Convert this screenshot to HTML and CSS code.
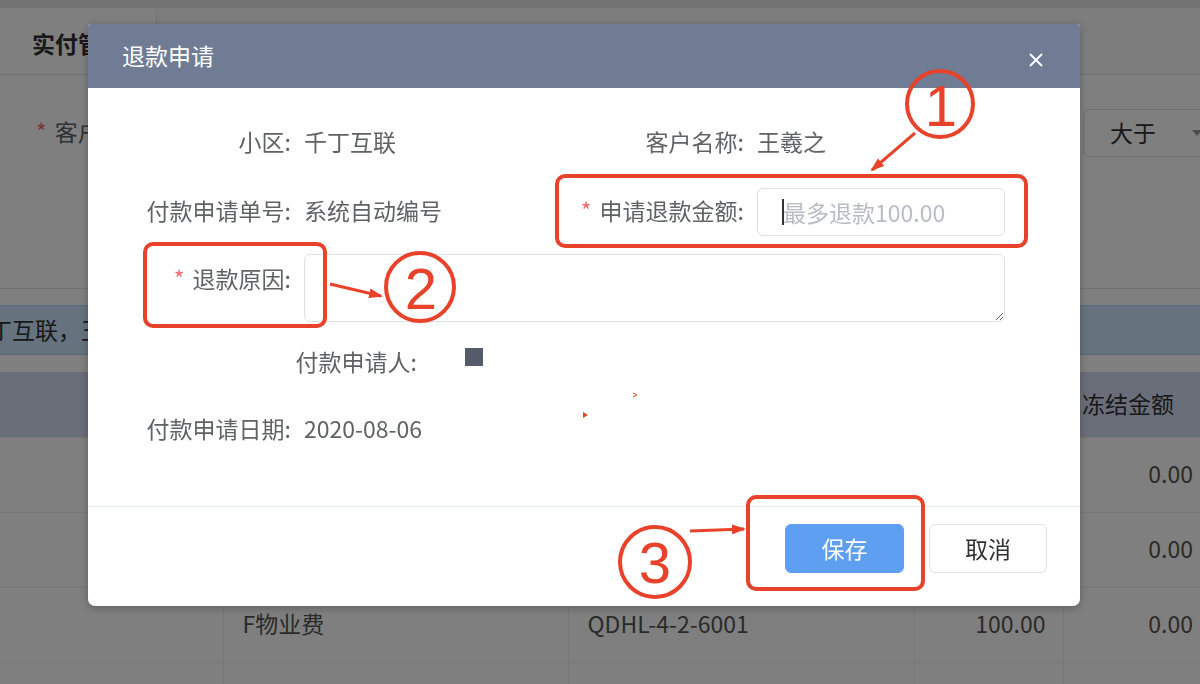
FILE: index.html
```html
<!DOCTYPE html>
<html lang="zh-CN">
<head>
    <meta charset="UTF-8">
    <meta name="viewport" content="width=device-width, initial-scale=1.0">
    <title>退款申请</title>
    <link rel="stylesheet" href="styles.css">
</head>
<body>

    <div class="page">
        <div class="top-strip"></div>
        <div class="tabs">
            <div class="tab">实付管理</div>
        </div>

        <div class="filter">
            <div class="filter-item"><span class="req">*</span>客户名称:</div>
            <div class="select">大于<span class="select-arrow"></span></div>
        </div>

        <div class="alert"><span class="alert-text">千丁互联，王羲之，共有3条待退款记录</span></div>

        <table class="grid">
            <thead>
                <tr>
                    <th class="c1"></th>
                    <th class="c2"></th>
                    <th class="c3"></th>
                    <th class="c4"></th>
                    <th class="c5">冻结金额</th>
                </tr>
            </thead>
            <tbody>
                <tr><td></td><td></td><td></td><td class="num"></td><td class="num">0.00</td></tr>
                <tr><td></td><td></td><td></td><td class="num"></td><td class="num">0.00</td></tr>
                <tr><td></td><td>F物业费</td><td>QDHL-4-2-6001</td><td class="num">100.00</td><td class="num">0.00</td></tr>
                <tr><td></td><td></td><td></td><td class="num"></td><td class="num"></td></tr>
            </tbody>
        </table>
    </div>

    <div class="mask"></div>

    <div class="dialog">
        <div class="dialog-header">
            <span class="dialog-title">退款申请</span>
            <svg class="dialog-close" width="14" height="14" viewBox="0 0 14 14">
                <path d="M1 1 L13 13 M13 1 L1 13" stroke="#fff" stroke-width="1.8" fill="none"/>
            </svg>
        </div>

        <div class="dialog-body">
            <div class="label">小区:</div>
            <div class="value">千丁互联</div>
            <div class="label">客户名称:</div>
            <div class="value">王羲之</div>

            <div class="label">付款申请单号:</div>
            <div class="value">系统自动编号</div>
            <div class="label"><span class="req">*</span>申请退款金额:</div>
            <div class="input-box"><span class="cursor"></span><input type="text" placeholder="最多退款100.00"></div>

            <div class="label"><span class="req">*</span>退款原因:</div>
            <textarea class="reason"></textarea>

            <div class="applicant">
                <div class="label wide">付款申请人:</div>
                <span class="avatar"></span>
            </div>

            <div class="label">付款申请日期:</div>
            <div class="value">2020-08-06</div>
        </div>

        <div class="dialog-footer">
            <button class="btn primary">保存</button>
            <button class="btn">取消</button>
        </div>
    </div>

    <!-- red annotation marks drawn on top of the screenshot -->
    <svg class="marks" width="1200" height="684" viewBox="0 0 1200 684">
        <defs>
            <marker id="head" markerWidth="14" markerHeight="10" refX="12" refY="5" orient="auto" markerUnits="userSpaceOnUse">
                <path d="M0 0 L14 5 L0 10 Z" fill="#e8422a"/>
            </marker>
        </defs>
        <g fill="none" stroke="#e8422a" stroke-width="4">
            <rect x="557" y="176" width="469" height="70" rx="8"/>
            <rect x="145" y="244" width="180" height="82" rx="8"/>
            <rect x="748" y="497" width="175" height="92" rx="8"/>
            <circle cx="940" cy="104" r="33"/>
            <circle cx="420" cy="287" r="34"/>
            <circle cx="655" cy="562" r="35"/>
        </g>
        <g stroke="#e8422a" stroke-width="3" fill="none">
            <line x1="915" y1="133" x2="872" y2="170" marker-end="url(#head)"/>
            <line x1="330" y1="284" x2="381" y2="296" marker-end="url(#head)"/>
            <line x1="690" y1="531" x2="744" y2="529" marker-end="url(#head)"/>
        </g>
        <g class="mark-num" fill="#e8422a" text-anchor="middle">
            <text x="941" y="126">1</text>
            <text x="421" y="309">2</text>
            <text x="655" y="583">3</text>
        </g>
        <path d="M633 393 L637 395 L633 397" stroke="#e8422a" stroke-width="1" fill="none"/>
        <path d="M583 412 L588 415 L583 418 Z" fill="#e8422a"/>
    </svg>

</body>
</html>
```

FILE: styles.css
```css
* {
    box-sizing: border-box;
}

html, body {
    margin: 0;
    height: 100%;
    overflow: hidden;
}

body {
    font-family: "Noto Sans CJK SC", "Noto Sans", sans-serif;
    font-size: 23px;
    color: #303133;
    background-color: #fff;
}

/* page behind the dialog */

.page {
    width: 1230px;
}

.top-strip {
    height: 8px;
    background-color: #e6e6e6;
}

.tabs {
    display: flex;
    height: 67px;
    background-color: #fbfbfb;
    border-bottom: 1px solid #e4e7ed;
}

.tab {
    width: 157px;
    padding: 4px 0 0 32px;
    line-height: 62px;
    font-weight: bold;
    background-color: #fff;
    border-right: 1px solid #e4e7ed;
    border-top-right-radius: 6px;
}

.filter {
    display: flex;
    justify-content: space-between;
    height: 214px;
    padding: 32px 7px 0 36px;
    border-bottom: 1px solid #e4e7ed;
}

.filter-item {
    line-height: 48px;
    color: #606266;
}

.req {
    color: #f56c6c;
    margin-right: 8px;
}

.select {
    position: relative;
    width: 140px;
    height: 48px;
    margin-top: 2px;
    padding-left: 26px;
    line-height: 44px;
    color: #303133;
    border: 1px solid #dcdfe6;
    border-radius: 6px;
}

.select-arrow {
    position: absolute;
    right: 20px;
    top: 20px;
    border-left: 5px solid transparent;
    border-right: 5px solid transparent;
    border-top: 6px solid #999;
}

.alert {
    height: 50px;
    margin-top: 16px;
    line-height: 46px;
    background-color: #cde6ff;
    border-top: 1px solid #b3cff0;
    border-bottom: 1px solid #b3cff0;
    overflow: hidden;
    white-space: nowrap;
}

.alert-text {
    margin-left: -34px;
}

.grid {
    width: 1210px;
    margin-top: 17px;
    border-collapse: collapse;
    table-layout: fixed;
}

.grid th {
    height: 65px;
    padding: 0 19px 3px;
    text-align: left;
    font-weight: normal;
    color: #303133;
    background-color: #d5dcf0;
}

.grid td {
    height: 75px;
    padding: 0 19px 3px;
    color: #555;
    border-top: 1px solid #ebeef5;
    border-left: 1px solid #ebeef5;
}

.grid td:first-child {
    border-left: none;
}

.grid td.num {
    text-align: right;
    padding-right: 17px;
}

.c1 { width: 223px; }
.c2 { width: 345px; }
.c3 { width: 346px; }
.c4 { width: 149px; }
.c5 { width: 147px; }

.mask {
    position: fixed;
    inset: 0;
    background-color: rgba(0, 0, 0, 0.5);
}

/* dialog */

.dialog {
    position: fixed;
    top: 24px;
    left: 88px;
    width: 992px;
    background-color: #fff;
    border-radius: 3px 3px 7px 7px;
    box-shadow: 0 2px 10px rgba(0, 0, 0, 0.25);
    overflow: hidden;
}

.dialog-header {
    display: flex;
    justify-content: space-between;
    align-items: center;
    height: 64px;
    padding: 0 37px 0 34px;
    background-color: #6f7c94;
}

.dialog-title {
    color: #fff;
    margin-top: -2px;
}

.dialog-close {
    margin-top: 8px;
}

/* each row track includes the space below it */
.dialog-body {
    display: grid;
    grid-template-columns: 176px 273px 180px 248px;
    grid-template-rows: 69px 68px 83px 67px 48px;
    align-items: start;
    padding: 29px 75px 54px 40px;
    color: #606266;
}

.label {
    padding-right: 13px;
    line-height: 48px;
    text-align: right;
    white-space: nowrap;
}

.value {
    line-height: 48px;
}

.input-box {
    position: relative;
    height: 48px;
    margin-top: 2px;
}

.input-box input {
    width: 100%;
    height: 48px;
    padding-left: 25px;
    font-family: inherit;
    font-size: 23px;
    color: #606266;
    border: 1.5px solid #dcdfe6;
    border-radius: 6px;
    outline: none;
}

.input-box input::placeholder {
    color: #b8bcc4;
}

.cursor {
    position: absolute;
    left: 25px;
    top: 11px;
    width: 1.5px;
    height: 26px;
    background-color: #333;
}

.reason {
    grid-column: 2 / 5;
    height: 68px;
    font-family: inherit;
    font-size: 23px;
    border: 1.5px solid #dcdfe6;
    border-radius: 6px;
    outline: none;
}

.applicant {
    grid-column: 1 / 5;
    display: flex;
}

.label.wide {
    width: 302px;
}

.avatar {
    width: 18px;
    height: 18px;
    margin: 11px 0 0 35px;
    background-color: #545b6b;
}

.dialog-footer {
    display: flex;
    justify-content: flex-end;
    gap: 25px;
    padding: 17px 33px 33px 0;
    border-top: 1px solid #e8edf3;
}

.btn {
    width: 118px;
    height: 49px;
    padding-bottom: 2px;
    font-family: inherit;
    font-size: 23px;
    color: #303133;
    background-color: #fff;
    border: 1.5px solid #dcdfe6;
    border-radius: 6px;
}

.btn.primary {
    width: 119px;
    color: #fff;
    background-color: #5f9ff2;
    border-color: #5f9ff2;
}

.marks {
    position: fixed;
    top: 0;
    left: 0;
    pointer-events: none;
}

.mark-num {
    font-family: "Liberation Sans", sans-serif;
    font-size: 58px;
}
```
